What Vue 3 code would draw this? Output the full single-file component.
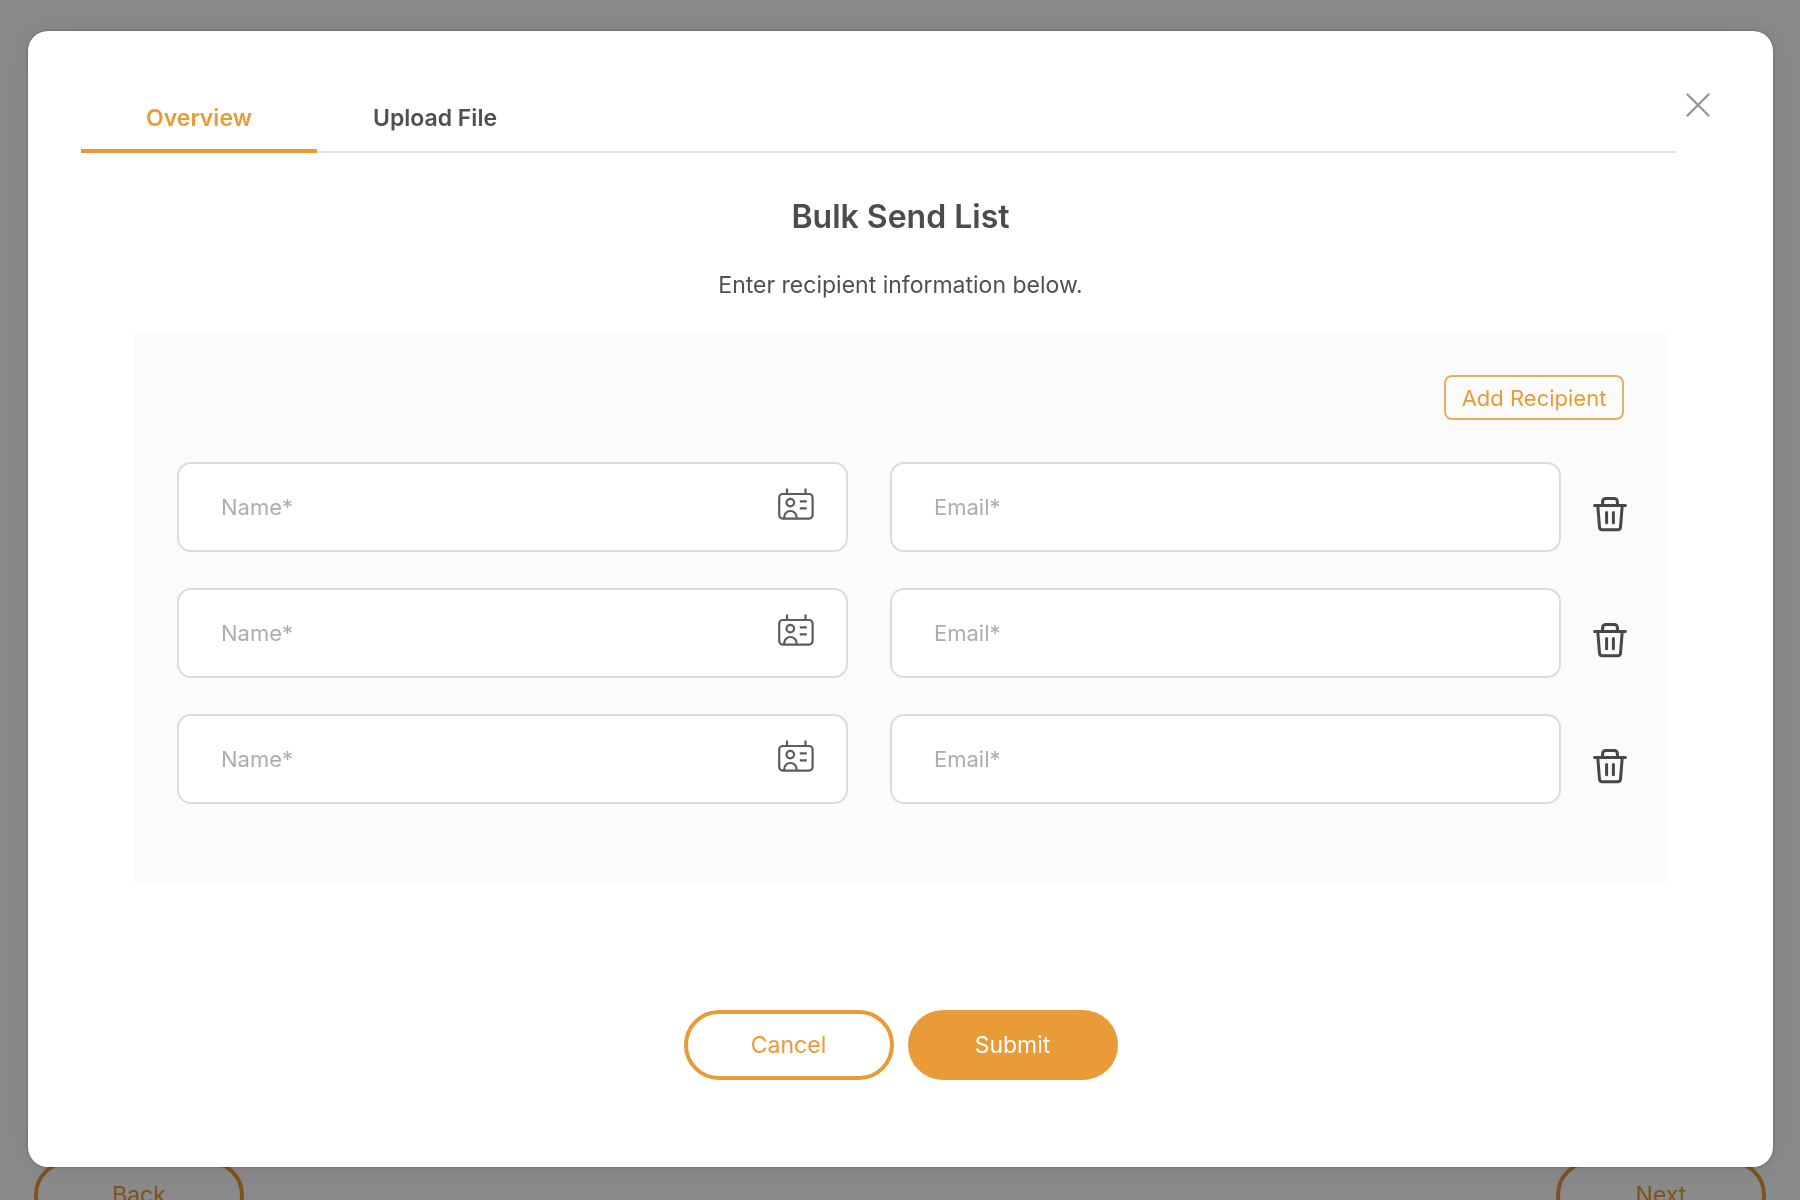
<script setup>
import { ref } from 'vue'

const tabs = ['Overview', 'Upload File']
const activeTab = ref('Overview')

let nextId = 4
const recipients = ref([1, 2, 3].map((id) => ({ id, name: '', email: '' })))

function addRecipient() {
  recipients.value.push({ id: nextId++, name: '', email: '' })
}

function removeRecipient(id) {
  recipients.value = recipients.value.filter((r) => r.id !== id)
}
</script>

<template>
  <div class="page">
    <main class="page-body"></main>
    <footer class="page-footer">
      <button type="button" class="pill outline">Back</button>
      <button type="button" class="pill outline">Next</button>
    </footer>

    <div class="overlay">
      <section class="dialog" role="dialog" aria-modal="true" aria-labelledby="dialog-title">
        <header class="dialog-header">
          <nav class="tabs" role="tablist">
            <button
              v-for="tab in tabs"
              :key="tab"
              type="button"
              role="tab"
              class="tab"
              :class="{ active: tab === activeTab }"
              :aria-selected="tab === activeTab"
              @click="activeTab = tab"
            >{{ tab }}</button>
          </nav>
          <button type="button" class="icon-button close" aria-label="Close">
            <svg width="24" height="24" viewBox="0 0 24 24" fill="none" stroke="#979797" stroke-width="2.4" stroke-linecap="round">
              <path d="M1.5 1.5l21 21M22.5 1.5l-21 21" />
            </svg>
          </button>
        </header>

        <h1 id="dialog-title" class="title">Bulk Send List</h1>
        <p class="subtitle">Enter recipient information below.</p>

        <form class="form" @submit.prevent>
          <div class="panel">
            <div class="panel-actions">
              <button type="button" class="add" @click="addRecipient">Add Recipient</button>
            </div>

            <div v-for="r in recipients" :key="r.id" class="row">
              <label class="field">
                <input v-model="r.name" type="text" placeholder="Name*" aria-label="Name" />
                <svg class="contact" width="36" height="32" viewBox="0 0 36 32" fill="none" stroke="#5c5c5c" stroke-width="2.2">
                  <rect x="1.2" y="6" width="33.4" height="24.6" rx="3.5" />
                  <path d="M9 .5V6M27.5 .5V6" />
                  <circle cx="12.3" cy="14.6" r="3.8" />
                  <path d="M6.2 30.5v-1.3a6.2 6.2 0 0 1 12.4 0v1.3M21.8 13.4h7M21.8 20.4h7" />
                </svg>
              </label>
              <label class="field">
                <input v-model="r.email" type="email" placeholder="Email*" aria-label="Email" />
              </label>
              <button type="button" class="icon-button trash" aria-label="Delete recipient" @click="removeRecipient(r.id)">
                <svg width="34" height="36" viewBox="0 0 34 36" fill="none" stroke="#474747" stroke-width="3" stroke-linecap="round" stroke-linejoin="round">
                  <path d="M1.6 9.5h30.8M9.6 9V5.6A3.2 3.2 0 0 1 12.8 2.4h8.4a3.2 3.2 0 0 1 3.2 3.2V9" />
                  <path d="M4.8 9.8l1.7 21.4a2.8 2.8 0 0 0 2.8 2.6h15.4a2.8 2.8 0 0 0 2.8-2.6L29.2 9.8" />
                  <path d="M13.6 16.5v10.2M20.4 16.5v10.2" />
                </svg>
              </button>
            </div>
          </div>

          <div class="actions">
            <button type="button" class="pill outline">Cancel</button>
            <button type="submit" class="pill solid">Submit</button>
          </div>
        </form>
      </section>
    </div>
  </div>
</template>

<style>
body {
  margin: 0;
}
</style>

<style scoped>
.page {
  height: 100vh;
  overflow: hidden;
  background: #fff;
  color: #505050;
  font-family: Inter, "Liberation Sans", sans-serif;
  font-size: 23px;
}

.page *,
.page {
  box-sizing: border-box;
}

button,
input {
  font: inherit;
}

button {
  padding: 0;
  border: 0;
  background: none;
  cursor: pointer;
}

.page-body {
  height: calc(100vh - 40px);
}

.page-footer {
  display: flex;
  justify-content: space-between;
  padding: 0 34px;
}

.overlay {
  position: fixed;
  inset: 0;
  display: flex;
  padding: 31px 27px 33px 28px;
  background: rgba(0, 0, 0, 0.46);
}

.dialog {
  flex: 1;
  overflow: auto;
  padding: 58px 53px 0;
  border-radius: 20px;
  background: #fff;
  box-shadow: 0 0 36px rgba(0, 0, 0, 0.1), 0 0 3px rgba(0, 0, 0, 0.3);
}

.dialog-header {
  display: flex;
  align-items: flex-start;
  gap: 10px;
  padding-right: 10px;
}

.tabs {
  display: flex;
  flex: 1;
  height: 64px;
  box-shadow: inset 0 -2px #e4e4e4;
}

.tab {
  width: 236px;
  padding-bottom: 3px;
  border-bottom: 4px solid transparent;
  color: #505050;
  font-weight: 600;
}

.tab.active {
  border-color: #e89b37;
  color: #e89b37;
}

.icon-button {
  display: flex;
}

.close {
  margin-top: 4px;
}

.title {
  margin: 44px 0 0;
  color: #4c4c4c;
  font-size: 32px;
  font-weight: 600;
  line-height: 40px;
  text-align: center;
}

.subtitle {
  margin: 32px 0 31px;
  line-height: 32px;
  text-align: center;
}

.form {
  padding: 0 53px;
}

.panel {
  display: flex;
  flex-direction: column;
  gap: 36px;
  padding: 43px 43px 79px;
  background: #fbfbfb;
}

.panel-actions {
  display: flex;
  justify-content: flex-end;
  margin-bottom: 6px;
}

.add {
  width: 180px;
  height: 45px;
  border: 2px solid #edae5c;
  border-radius: 8px;
  color: #e89b37;
  font-size: 22px;
}

.row {
  display: flex;
  align-items: center;
}

.field {
  display: flex;
  flex: 1;
  align-items: center;
  height: 90px;
  padding: 0 32px 0 42px;
  border: 2px solid #dcdcdc;
  border-radius: 14px;
  background: #fff;
}

.field + .field {
  margin-left: 42px;
}

.field input {
  flex: 1;
  min-width: 0;
  padding: 0;
  border: 0;
  outline: 0;
  background: none;
  color: #505050;
  font-size: 22px;
}

.field input::placeholder {
  color: #adadad;
  opacity: 1;
}

.contact {
  margin-bottom: 6px;
}

.trash {
  margin: 14px -3px 0 32px;
}

.actions {
  display: flex;
  justify-content: center;
  gap: 14px;
  margin-top: 127px;
}

.pill {
  width: 210px;
  height: 70px;
  border-radius: 35px;
}

.outline {
  border: 4px solid #e89b37;
  color: #e89b37;
}

.solid {
  background: #e89b37;
  color: #fff;
}
</style>
